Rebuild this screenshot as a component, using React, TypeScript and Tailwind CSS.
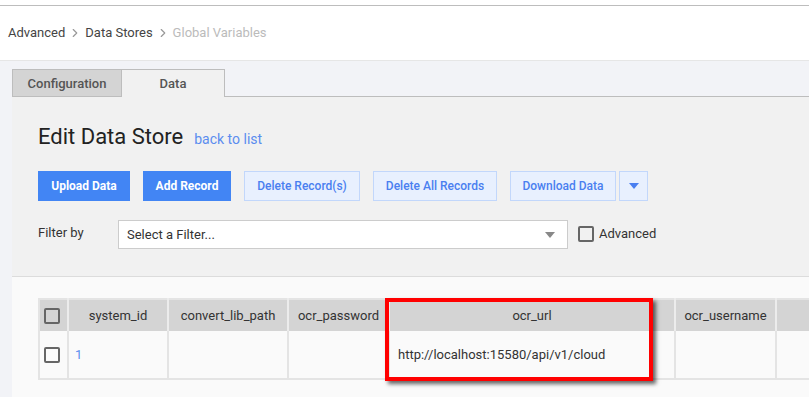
import { ChevronRight } from 'lucide-react';

const HEADERS = [
  { label: 'system_id', w: 'w-[100px]' },
  { label: 'convert_lib_path', w: 'w-[120px]' },
  { label: 'ocr_password', w: 'w-[101px]' },
  { label: 'ocr_url', w: 'w-[286px]' },
  { label: 'ocr_username', w: 'w-[101px]' },
  { label: '', w: 'w-[140px]' },
];

const ROW = ['1', '', '', 'http://localhost:15580/api/v1/cloud', '', ''];

function Checkbox({ bg }: { bg: string }) {
  return <span className={`block w-[16px] h-[16px] rounded-[2px] border-2 border-[#666] ${bg}`} />;
}

function Caret({ className }: { className: string }) {
  return (
    <svg width="10" height="6" viewBox="0 0 10 6" className={className}>
      <path d="M0 0h10L5 6z" fill="currentColor" />
    </svg>
  );
}

export default function App() {
  return (
    <div className="relative w-[809px] h-[397px] overflow-hidden bg-white font-['Roboto',sans-serif] text-[13px] text-[#333]">
      <div className="h-[5px]" />
      <div className="h-px bg-[#bdbdbd]" />

      {/* breadcrumb */}
      <div className="h-[54px] flex items-center px-2 text-[13px]">
        <span className="text-[#444]">Advanced</span>
        <ChevronRight className="w-[14px] h-[14px] mx-[3px] text-[#999]" strokeWidth={2} />
        <span className="text-[#444]">Data Stores</span>
        <ChevronRight className="w-[14px] h-[14px] mx-[3px] text-[#999]" strokeWidth={2} />
        <span className="text-[#bbb]">Global Variables</span>
      </div>

      <div className="border-t border-[#e6e6e6] bg-[#f2f3f7] pl-3 h-full">
        {/* tabs */}
        <div className="flex items-end pt-2">
          <div className="w-[110px] h-[28px] flex items-center justify-center pt-[2px] bg-[#d4d4d4] border border-[#bdbdbd] font-medium text-[#555]">
            Configuration
          </div>
          <div className="w-[103px] h-[28px] flex items-center justify-center bg-[#f1f1f1] border-t border-r border-[#bdbdbd] font-medium text-[#555]">
            Data
          </div>
          <div className="flex-1 h-[28px] border-b border-[#bdbdbd]" />
        </div>

        {/* panel */}
        <div className="bg-[#f1f1f1] pl-[26px] pt-[26px] pb-[27px]">
          <div className="flex items-baseline gap-[11px] h-[28px]">
            <h1 className="text-[22px] leading-[28px] text-[#222]">Edit Data Store</h1>
            <a className="text-[14px] text-[#5b8def]">back to list</a>
          </div>

          <div className="flex items-center mt-5 h-[30px]">
            <button className="h-[30px] w-[92px] bg-[#4285f4] text-white font-bold text-[12px]">Upload Data</button>
            <button className="h-[30px] w-[88px] ml-[13px] bg-[#4285f4] text-white font-bold text-[12px]">Add Record</button>
            <button className="h-[30px] w-[116px] ml-[13px] bg-[#e8f0fe] border border-[#c2d7fb] text-[#4a7ff0] font-medium text-[12px]">Delete Record(s)</button>
            <button className="h-[30px] w-[124px] ml-[13px] bg-[#e8f0fe] border border-[#c2d7fb] text-[#4a7ff0] font-medium text-[12px]">Delete All Records</button>
            <button className="h-[30px] w-[106px] ml-[13px] bg-[#e8f0fe] border border-[#c2d7fb] text-[#4a7ff0] font-medium text-[12px]">Download Data</button>
            <button className="h-[30px] w-[29px] ml-[3px] bg-[#e8f0fe] border border-[#c2d7fb] text-[#4a7ff0] flex items-center justify-center">
              <Caret className="" />
            </button>
          </div>

          <div className="flex items-center mt-[19px] h-[29px]">
            <span className="w-[80px] -mt-[3px]">Filter by</span>
            <div className="w-[450px] h-[29px] bg-white border border-[#ccc] flex items-center justify-between pl-2 pr-[12px]">
              <span>Select a Filter...</span>
              <Caret className="text-[#888]" />
            </div>
            <span className="ml-[10px] -mt-[2px]"><Checkbox bg="bg-transparent" /></span>
            <span className="ml-[5px] -mt-[2px]">Advanced</span>
          </div>
        </div>

        {/* table area */}
        <div className="bg-[#fafafa] border-t border-[#dcdcdc] pl-[26px] pt-[21px] h-full overflow-hidden">
          <table className="w-[877px] min-w-[877px] border-collapse table-fixed border-2 border-[#e4e4e4]">
            <colgroup>
              <col className="w-[29px]" />
              {HEADERS.map((h, i) => (
                <col key={i} className={h.w} />
              ))}
            </colgroup>
            <thead>
              <tr className="bg-[#d4d4d4] h-[32px]">
                <th className="border-r-2 border-[#ececec] pl-[4px] pr-[6px] align-middle">
                  <Checkbox bg="bg-transparent" />
                </th>
                {HEADERS.map((h, i) => (
                  <th key={i} className="border-r-2 border-[#ececec] font-normal text-center text-[13px] text-[#333] whitespace-nowrap">
                    {h.label}
                  </th>
                ))}
              </tr>
            </thead>
            <tbody>
              <tr className="bg-[#fafafa] h-[48px]">
                <td className="border-r-2 border-[#e4e4e4] pl-[4px] pr-[6px] align-middle">
                  <Checkbox bg="bg-transparent" />
                </td>
                {ROW.map((v, i) => (
                  <td key={i} className={`border-r-2 border-[#e4e4e4] whitespace-nowrap ${i === 0 ? 'pl-[6px] text-[#5b8def]' : 'pl-2 text-[#333]'}`}>
                    {v}
                  </td>
                ))}
              </tr>
            </tbody>
          </table>
        </div>
      </div>

      {/* highlight annotation */}
      <div className="absolute left-[385px] top-[298px] w-[268px] h-[83px] border-4 border-[#ff0000] shadow-[3px_3px_4px_rgba(0,0,0,0.6)]" />
    </div>
  );
}
